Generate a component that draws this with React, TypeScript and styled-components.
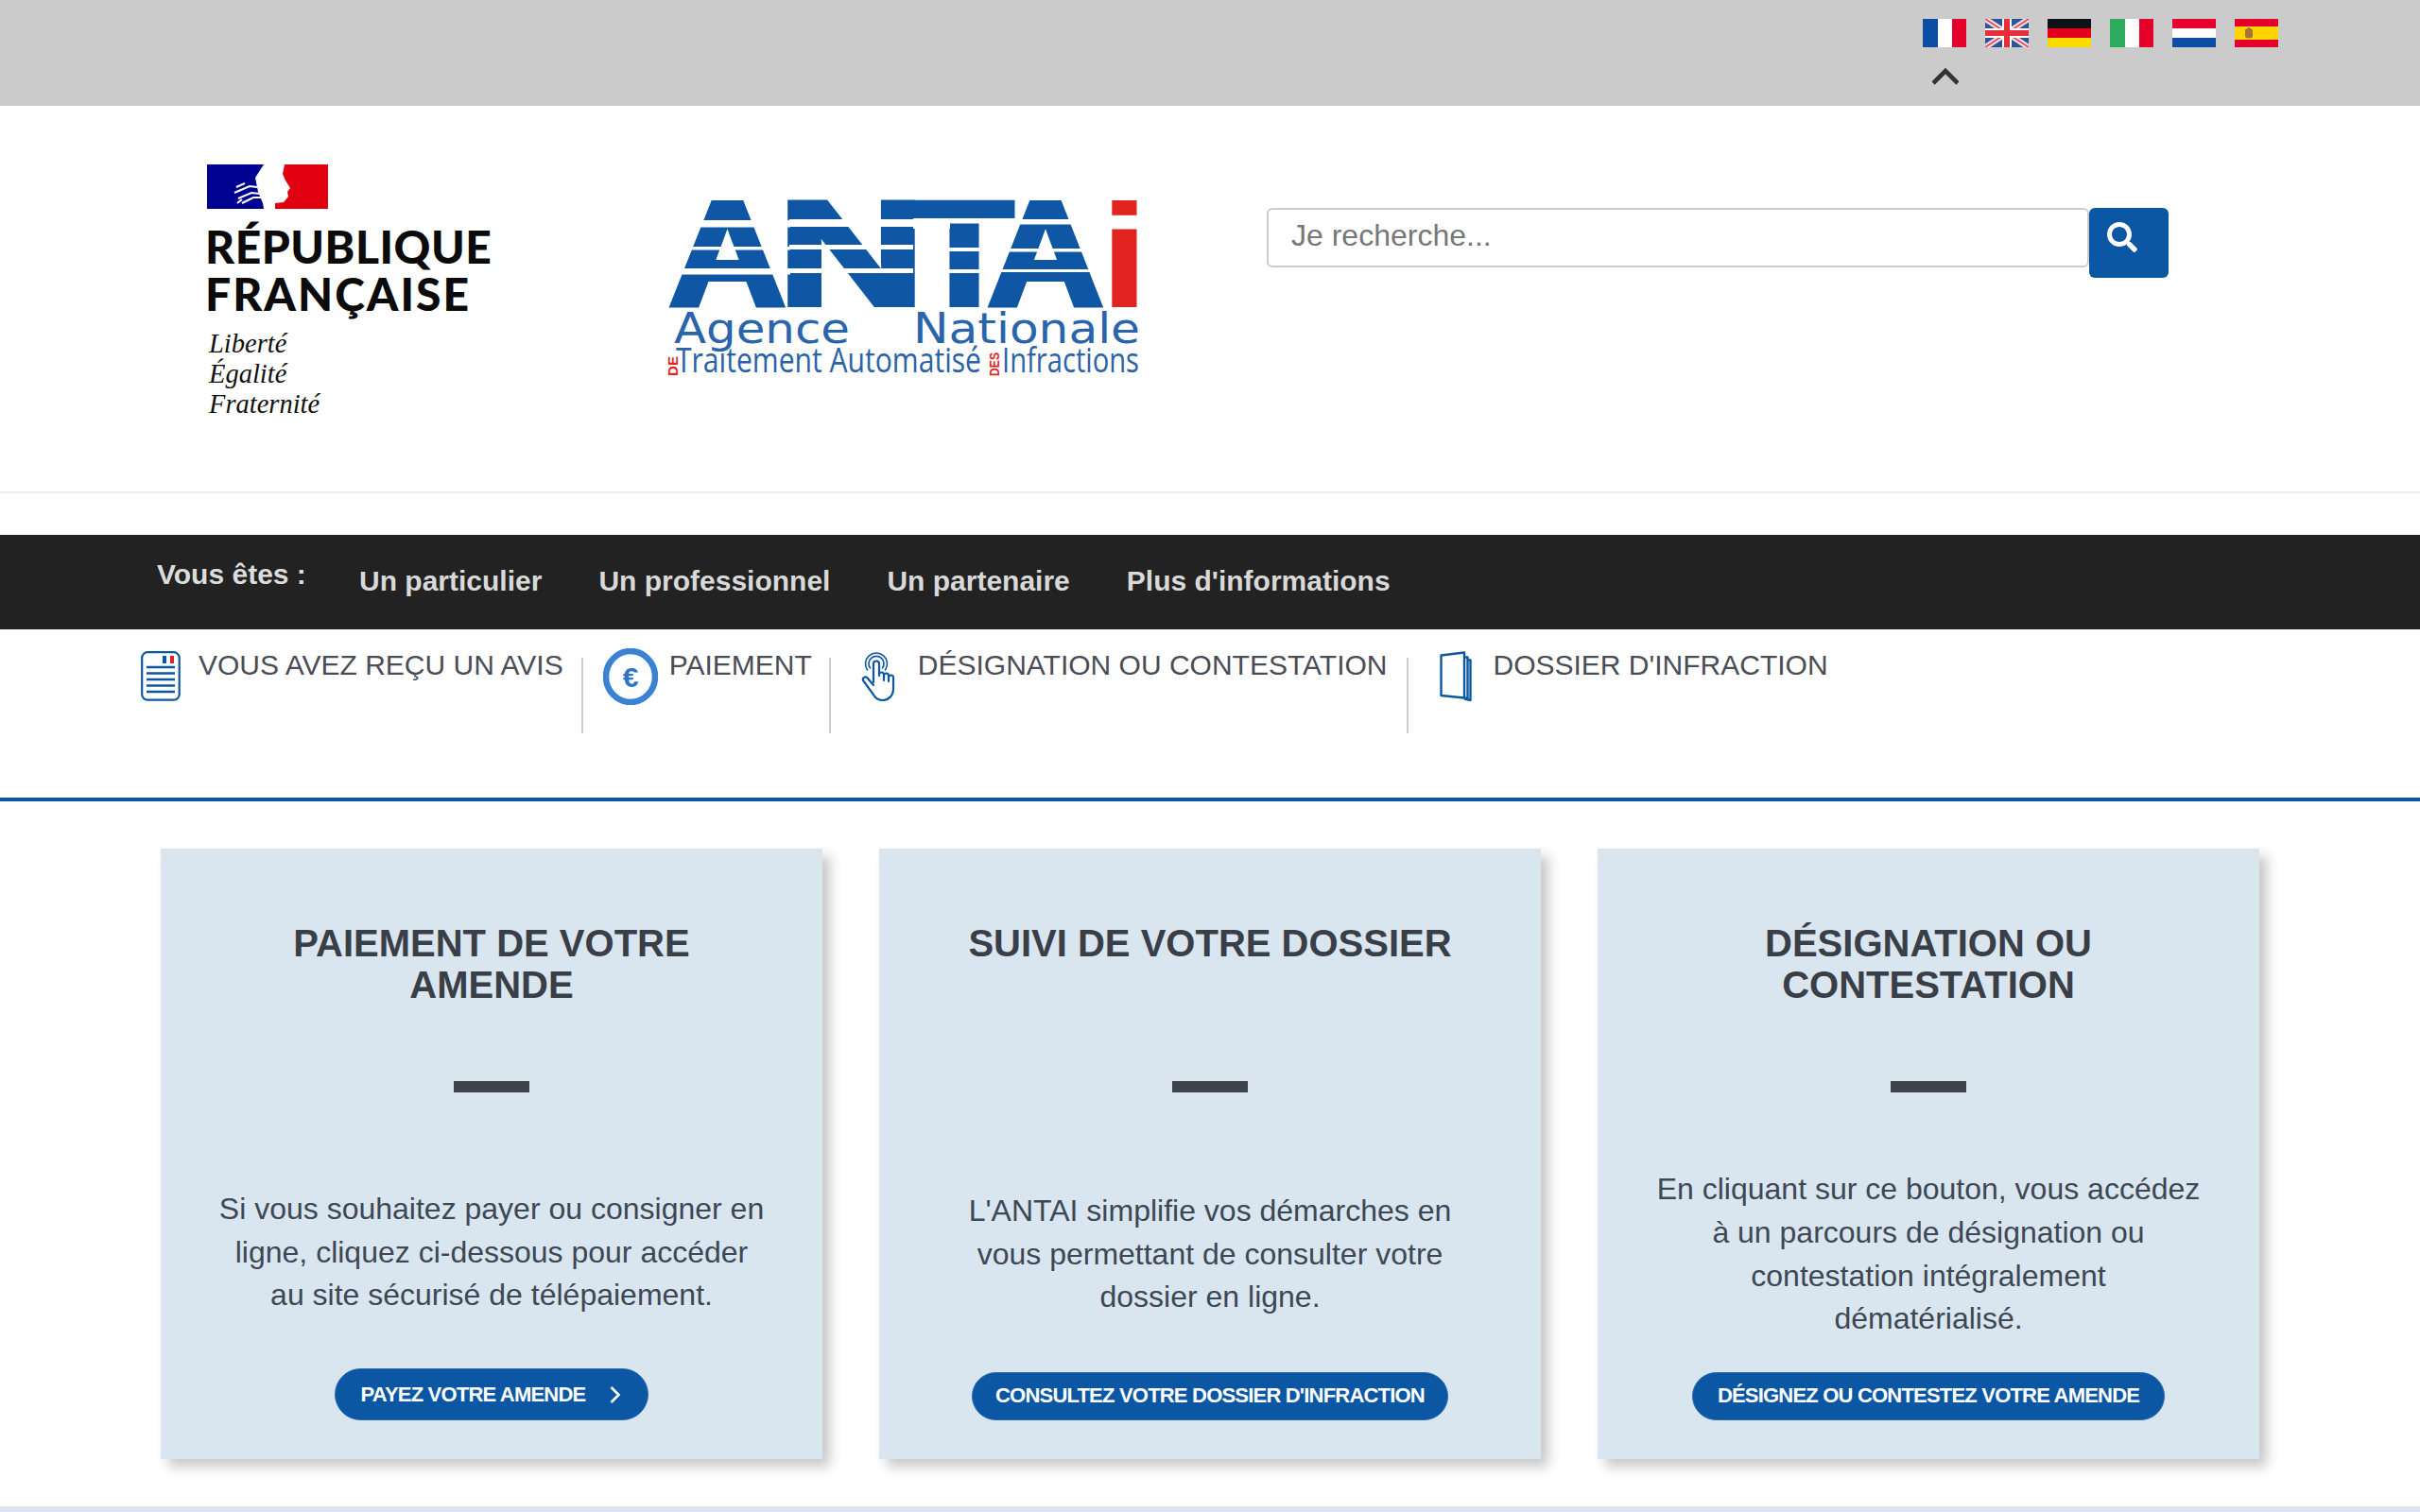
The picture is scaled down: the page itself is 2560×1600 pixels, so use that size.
import React from "react";
import styled, { createGlobalStyle } from "styled-components";
import { FaSearch } from "react-icons/fa";

const Global = createGlobalStyle`
  html, body { margin: 0; padding: 0; background: #fff; }
  body { font-family: "Liberation Sans", Arial, sans-serif; }
  * { box-sizing: border-box; }
`;

const Page = styled.div`
  width: 2560px;
  height: 1600px;
  overflow: hidden;
  display: flex;
  flex-direction: column;
`;

/* ---------- language bar ---------- */
const TopBar = styled.div`
  height: 112px;
  background: #cbcbcb;
  display: flex;
  justify-content: flex-end;
  padding: 20px 150px 0 0;
`;
const LangColumn = styled.div`
  display: flex;
  flex-direction: column;
  align-items: flex-start;
`;
const Flags = styled.div`
  display: flex;
  gap: 20px;
`;
const FlagSvg = styled.svg`
  display: block;
  width: 46px;
  height: 30px;
`;
const Collapse = styled.svg`
  display: block;
  width: 28px;
  height: 20px;
  margin: 20px 0 0 10px;
`;

const France = () => (
  <FlagSvg viewBox="0 0 46 30">
    <rect width="16" height="30" fill="#0b4ea2" />
    <rect x="16" width="15" height="30" fill="#fff" />
    <rect x="31" width="15" height="30" fill="#e4002b" />
  </FlagSvg>
);
const Uk = () => (
  <FlagSvg viewBox="0 0 46 30">
    <rect width="46" height="30" fill="#2a5598" />
    <path d="M0 0L46 30M46 0L0 30" stroke="#f2dfe2" strokeWidth="6" />
    <path d="M0 0L46 30M46 0L0 30" stroke="#e8404c" strokeWidth="1.6" />
    <path d="M23 0V30M0 15H46" stroke="#fff" strokeWidth="10" />
    <path d="M23 0V30M0 15H46" stroke="#e62e3a" strokeWidth="6" />
  </FlagSvg>
);
const Germany = () => (
  <FlagSvg viewBox="0 0 46 30">
    <rect width="46" height="10" fill="#0e1116" />
    <rect y="10" width="46" height="10" fill="#e3001b" />
    <rect y="20" width="46" height="10" fill="#ffdc00" />
  </FlagSvg>
);
const Italy = () => (
  <FlagSvg viewBox="0 0 46 30">
    <rect width="16" height="30" fill="#2eaa5c" />
    <rect x="16" width="15" height="30" fill="#fff" />
    <rect x="31" width="15" height="30" fill="#e4002b" />
  </FlagSvg>
);
const Netherlands = () => (
  <FlagSvg viewBox="0 0 46 30">
    <rect width="46" height="10" fill="#e4002b" />
    <rect y="10" width="46" height="10" fill="#fff" />
    <rect y="20" width="46" height="10" fill="#0b4ea2" />
  </FlagSvg>
);
const Spain = () => (
  <FlagSvg viewBox="0 0 46 30">
    <rect width="46" height="30" fill="#e4002b" />
    <rect y="8" width="46" height="14" fill="#ffd400" />
    <path d="M11 11.5l4-2.5 4 2.5V19q-4 3-8 0z" fill="#a0763a" />
  </FlagSvg>
);

/* ---------- header ---------- */
const Header = styled.header`
  height: 410px;
  border-bottom: 2px solid #ececec;
  display: flex;
  align-items: flex-start;
`;
const RepublicBlock = styled.div`
  width: 481px;
  margin: 62px 0 0 219px;
  flex: none;
`;
const MarianneSvg = styled.svg`
  display: block;
  width: 128px;
  height: 47px;
`;
const RepublicName = styled.div`
  margin: 15px 0 0 -2px;
  font-family: "Lato", "Liberation Sans", sans-serif;
  font-weight: 900;
  font-size: 48px;
  line-height: 50px;
  color: #0b0b0b;
`;
const NameLine = styled.div<{ $tracking: number }>`
  letter-spacing: ${(p) => p.$tracking}px;
`;
const Motto = styled.div`
  margin: 12px 0 0 2px;
  font-family: "Liberation Serif", serif;
  font-style: italic;
  font-size: 28.5px;
  line-height: 32px;
  color: #111;
`;
const AntaiSvg = styled.svg`
  display: block;
  width: 510px;
  height: 200px;
  margin-top: 93px;
  flex: none;
`;
const Search = styled.form`
  display: flex;
  align-items: flex-start;
  margin: 108px 0 0 130px;
`;
const SearchInput = styled.input`
  width: 870px;
  height: 63px;
  border: 2px solid #ccc;
  border-radius: 6px;
  padding: 0 24px 4px;
  font: 32px "Liberation Sans", sans-serif;
  color: #555;
  outline: none;
  &::placeholder { color: #777; opacity: 1; }
`;
const SearchButton = styled.button`
  width: 84px;
  height: 74px;
  border: 0;
  border-radius: 6px;
  background: #0b57a4;
  color: #fff;
  padding: 15px 0 0 0;
  display: flex;
  justify-content: center;
  align-items: flex-start;
  svg { width: 32px; height: 32px; margin-left: -14px; }
`;

const Marianne = () => (
  <MarianneSvg viewBox="0 0 128 47">
    <rect width="128" height="47" fill="#e1000f" />
    <rect width="62" height="47" fill="#000091" />
    <path d="M60 0H82L80 10 83 17 88 25 85 29 86 34 81 40 72 41 72 47H60L59 41 54 29 51 14Z" fill="#fff" />
    <path
      d="M31 24l9-4 M29 30l16-7 8 1 M33 36l14-6 9 1 M37 41l12-6 8 0 M32 41l5-4"
      stroke="#fff"
      strokeWidth="2.1"
      fill="none"
    />
  </MarianneSvg>
);

const AntaiLetter = styled.text`
  font-family: "Liberation Sans", sans-serif;
  font-weight: 700;
  font-size: 155px;
  fill: #0f57a5;
  stroke: #0f57a5;
  stroke-width: 6px;
`;
const AntaiDot = styled(AntaiLetter)`
  fill: #e2231f;
  stroke: #e2231f;
  stroke-width: 0;
`;
const AntaiAgency = styled.text`
  font-family: "DejaVu Sans", sans-serif;
  font-size: 44px;
  fill: #2a64ab;
`;
const AntaiLong = styled.text`
  font-family: "Open Sans", sans-serif;
  font-size: 37px;
  fill: #2a62a9;
`;
const AntaiSmall = styled.text`
  font-family: "Liberation Sans", sans-serif;
  font-weight: 700;
  font-size: 15px;
  fill: #e2231f;
`;

const stripes: [number, number, number, number][] = [
  [700, 233, 136, 7.5],
  [700, 261, 136, 3.5],
  [700, 284, 136, 6.5],
  [835, 232, 131, 8],
  [835, 259, 131, 5],
  [835, 284, 131, 5],
  [966, 231, 39, 11],
  [1036, 231, 38, 11],
  [1000, 231, 40, 5.5],
  [1000, 262, 40, 4],
  [1000, 285, 40, 4],
  [1042, 232, 130, 5.5],
  [1042, 263, 130, 3.5],
  [1042, 285, 130, 3],
];

const AntaiLogo = () => (
  <AntaiSvg viewBox="700 205 510 200">
    <AntaiLetter x="708" y="322" textLength="123" lengthAdjust="spacingAndGlyphs">A</AntaiLetter>
    <AntaiLetter x="823" y="322" textLength="155" lengthAdjust="spacingAndGlyphs">N</AntaiLetter>
    <AntaiLetter x="968" y="322" textLength="104" lengthAdjust="spacingAndGlyphs">T</AntaiLetter>
    <AntaiLetter x="1045" y="322" textLength="122" lengthAdjust="spacingAndGlyphs">A</AntaiLetter>
    {stripes.map(([x, y, w, h]) => (
      <rect key={`${x}-${y}`} x={x} y={y} width={w} height={h} fill="#fff" />
    ))}
    <AntaiDot x="1163" y="325" textLength="53" lengthAdjust="spacingAndGlyphs" fontSize="158">i</AntaiDot>
    <AntaiAgency x="713" y="363" textLength="186" lengthAdjust="spacingAndGlyphs">Agence</AntaiAgency>
    <AntaiAgency x="966" y="363" textLength="240" lengthAdjust="spacingAndGlyphs">Nationale</AntaiAgency>
    <AntaiLong x="715" y="394" textLength="323" lengthAdjust="spacingAndGlyphs">Traitement Automatisé</AntaiLong>
    <AntaiLong x="1060" y="394" textLength="145" lengthAdjust="spacingAndGlyphs">Infractions</AntaiLong>
    <AntaiSmall transform="translate(717 398) rotate(-90)" textLength="21" lengthAdjust="spacingAndGlyphs">DE</AntaiSmall>
    <AntaiSmall transform="translate(1057 398) rotate(-90)" textLength="25" lengthAdjust="spacingAndGlyphs">DES</AntaiSmall>
  </AntaiSvg>
);

/* ---------- dark nav ---------- */
const DarkNav = styled.nav`
  margin-top: 44px;
  height: 100px;
  background: #222;
  display: flex;
  align-items: flex-start;
  padding-left: 166px;
  color: #dcdcdc;
  font-weight: 700;
  font-size: 30px;
  line-height: 34px;
`;
const NavLabel = styled.span`
  width: 214px;
  padding-top: 25px;
  flex: none;
`;
const NavLink = styled.a`
  padding-top: 32px;
  margin-right: 60px;
  color: #d9d9d9;
`;

/* ---------- section tabs ---------- */
const Tabs = styled.div`
  height: 182px;
  border-bottom: 4px solid #0b57a4;
  display: flex;
  align-items: flex-start;
  padding-left: 149px;
`;
const Tab = styled.a<{ $gap: number; $iconTop: number }>`
  display: flex;
  align-items: flex-start;
  gap: ${(p) => p.$gap}px;
  font-size: 30px;
  line-height: 34px;
  color: #4a4d55;
  padding-top: 21px;
  svg { margin-top: ${(p) => p.$iconTop}px; flex: none; display: block; }
`;
const Divider = styled.span<{ $left: number; $right: number }>`
  width: 2px;
  height: 80px;
  margin: 30px ${(p) => p.$right}px 0 ${(p) => p.$left}px;
  background: #ccc;
  flex: none;
`;
const EuroSign = styled.text`
  font-family: "Liberation Sans", sans-serif;
  font-weight: 700;
  font-size: 30px;
  fill: #2f75c4;
`;

const DocIcon = () => (
  <svg width="42" height="53" viewBox="0 0 42 53" fill="none">
    <rect x="1.2" y="1.2" width="39.5" height="50.5" rx="6" stroke="#0b57a4" strokeWidth="2.2" />
    <rect x="23" y="5" width="4" height="8" fill="#0b57a4" />
    <rect x="31" y="5" width="4" height="8" fill="#d9232b" />
    <path d="M6 17H36M6 23.5H36M6 30H36M6 36.5H36M6 43H36" stroke="#0b57a4" strokeWidth="2.6" />
  </svg>
);
const EuroIcon = () => (
  <svg width="58" height="60" viewBox="0 0 58 60" fill="none">
    <ellipse cx="29" cy="30" rx="26" ry="27" stroke="#3a82d4" strokeWidth="6.5" />
    <EuroSign x="29" y="41" textAnchor="middle">€</EuroSign>
  </svg>
);
const HandIcon = () => (
  <svg width="36" height="53" viewBox="0 0 36 53" fill="none" stroke="#0b57a4" strokeWidth="2.2" strokeLinecap="round">
    <path d="M13 33V13.5a3 3 0 0 1 6 0V26" />
    <path d="M19 25a2.5 2.5 0 0 1 5 0V31" />
    <path d="M24 26a2.5 2.5 0 0 1 5 0V32" />
    <path d="M29 28a2.5 2.5 0 0 1 5 0V40c0 7-5 12-11 12c-5 0-8-2-10-6L2 31c-1-3 3-5 5-2l6 7" />
    <path d="M9.5 18a8 8 0 1 1 13 0" strokeWidth="1.6" />
    <path d="M6.5 20a11.5 11.5 0 1 1 19 0" strokeWidth="1.6" />
  </svg>
);
const BookIcon = () => (
  <svg width="34" height="53" viewBox="0 0 34 53" fill="none" stroke="#0b57a4" strokeWidth="2.4" strokeLinejoin="round">
    <path d="M1.5 4.5L26 1.5V49.5L1.5 47Z" />
    <path d="M26 6.5H29.5V50.5L26 49.5" />
    <path d="M29.5 9.5H32.5V52L26 50.5" />
  </svg>
);

/* ---------- cards ---------- */
const Cards = styled.main`
  display: grid;
  grid-template-columns: repeat(3, 700px);
  gap: 60px;
  padding: 50px 0 0 170px;
  flex: 1;
`;
const Card = styled.section`
  height: 646px;
  background: #d9e6f0;
  box-shadow: 8px 8px 12px rgba(0, 0, 0, 0.22);
  padding: 78px 30px 41px;
  display: flex;
  flex-direction: column;
  align-items: center;
  text-align: center;
  color: #3a3f47;
`;
const CardTitle = styled.h2`
  margin: 0;
  height: 88px;
  font-size: 40px;
  line-height: 44px;
  font-weight: 700;
`;
const CardBar = styled.div`
  width: 80px;
  height: 12px;
  margin-top: 80px;
  background: #3f434b;
  flex: none;
`;
const CardBody = styled.p`
  flex: 1;
  margin: 0;
  padding-top: 47px;
  display: flex;
  align-items: center;
  font-size: 32px;
  line-height: 45.7px;
  color: #3e4754;
`;
const CardAction = styled.a<{ $tall?: boolean; $pad: number }>`
  display: inline-flex;
  align-items: center;
  height: ${(p) => (p.$tall ? 55 : 51)}px;
  padding: ${(p) => (p.$tall ? "1px" : "0")} ${(p) => p.$pad}px ${(p) => (p.$tall ? "0" : "2px")};
  border-radius: 28px;
  background: #0b57a4;
  border: 1px solid #2a69ae;
  color: #fff;
  font-size: 22px;
  font-weight: 700;
  letter-spacing: -0.8px;
  white-space: nowrap;
  flex: none;
`;
const ActionArrow = styled.svg`
  width: 14px;
  height: 20px;
  margin-left: 25px;
`;

const Footer = styled.footer`
  height: 6px;
  background: #d9e6f0;
  flex: none;
`;

const cards = [
  {
    title: ["PAIEMENT DE VOTRE", "AMENDE"],
    body: ["Si vous souhaitez payer ou consigner en", "ligne, cliquez ci-dessous pour accéder", "au site sécurisé de télépaiement."],
    action: "PAYEZ VOTRE AMENDE",
    pad: 27,
    arrow: true,
  },
  {
    title: ["SUIVI DE VOTRE DOSSIER"],
    body: ["L'ANTAI simplifie vos démarches en", "vous permettant de consulter votre", "dossier en ligne."],
    action: "CONSULTEZ VOTRE DOSSIER D'INFRACTION",
    pad: 24,
  },
  {
    title: ["DÉSIGNATION OU", "CONTESTATION"],
    body: ["En cliquant sur ce bouton, vous accédez", "à un parcours de désignation ou", "contestation intégralement", "dématérialisé."],
    action: "DÉSIGNEZ OU CONTESTEZ VOTRE AMENDE",
    pad: 26,
  },
];

const Lines = ({ lines }: { lines: string[] }) => (
  <span>
    {lines.map((l, i) => (
      <React.Fragment key={l}>
        {i > 0 && <br />}
        {l}
      </React.Fragment>
    ))}
  </span>
);

export default function App() {
  return (
    <Page>
      <Global />
      <TopBar>
        <LangColumn>
          <Flags>
            <France />
            <Uk />
            <Germany />
            <Italy />
            <Netherlands />
            <Spain />
          </Flags>
          <Collapse viewBox="0 0 28 20" fill="none">
            <path d="M1 18L14 5L27 18" stroke="#333" strokeWidth="4.6" />
          </Collapse>
        </LangColumn>
      </TopBar>

      <Header>
        <RepublicBlock>
          <Marianne />
          <RepublicName>
            <NameLine $tracking={0.5}>RÉPUBLIQUE</NameLine>
            <NameLine $tracking={2}>FRANÇAISE</NameLine>
          </RepublicName>
          <Motto>
            Liberté
            <br />
            Égalité
            <br />
            Fraternité
          </Motto>
        </RepublicBlock>
        <AntaiLogo />
        <Search onSubmit={(e) => e.preventDefault()}>
          <SearchInput placeholder="Je recherche..." />
          <SearchButton type="submit" aria-label="Rechercher">
            <FaSearch />
          </SearchButton>
        </Search>
      </Header>

      <DarkNav>
        <NavLabel>Vous êtes :</NavLabel>
        <NavLink>Un particulier</NavLink>
        <NavLink>Un professionnel</NavLink>
        <NavLink>Un partenaire</NavLink>
        <NavLink>Plus d'informations</NavLink>
      </DarkNav>

      <Tabs>
        <Tab $gap={19} $iconTop={2}>
          <DocIcon />
          VOUS AVEZ REÇU UN AVIS
        </Tab>
        <Divider $left={19} $right={21} />
        <Tab $gap={12} $iconTop={-1}>
          <EuroIcon />
          PAIEMENT
        </Tab>
        <Divider $left={18} $right={32} />
        <Tab $gap={24} $iconTop={2}>
          <HandIcon />
          DÉSIGNATION OU CONTESTATION
        </Tab>
        <Divider $left={21} $right={33} />
        <Tab $gap={22} $iconTop={2}>
          <BookIcon />
          DOSSIER D'INFRACTION
        </Tab>
      </Tabs>

      <Cards>
        {cards.map((c) => (
          <Card key={c.action}>
            <CardTitle>
              <Lines lines={c.title} />
            </CardTitle>
            <CardBar />
            <CardBody>
              <span>
                <Lines lines={c.body} />
              </span>
            </CardBody>
            <CardAction $tall={c.arrow} $pad={c.pad}>
              {c.action}
              {c.arrow && (
                <ActionArrow viewBox="0 0 14 20" fill="none">
                  <path d="M2.5 2L10.5 10L2.5 18" stroke="#fff" strokeWidth="2.6" />
                </ActionArrow>
              )}
            </CardAction>
          </Card>
        ))}
      </Cards>
      <Footer />
    </Page>
  );
}
